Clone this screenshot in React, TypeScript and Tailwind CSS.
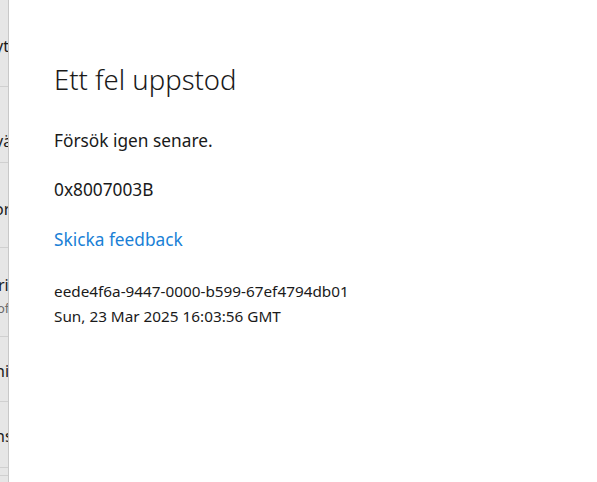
export default function App() {
  return (
    <div
      className="flex w-[597px] h-[482px] bg-white overflow-hidden"
      style={{ fontFamily: '"Noto Sans", "Open Sans", sans-serif' }}
    >
      <div className="w-[9px] shrink-0 bg-[#e6e6e6] border-r border-[#c8c8c8] flex flex-col overflow-hidden">
        <div className="h-[87px] border-b border-[#d0d0d0] flex items-center shrink-0">
          <span className="ml-[-5px] text-[16px] text-[#1a1a1a] whitespace-nowrap pt-[6px]">yt</span>
        </div>
        <div className="h-[76px] border-b border-[#d0d0d0] flex items-center shrink-0 pt-[32px]">
          <span className="ml-[-5px] text-[16px] text-[#1a1a1a] whitespace-nowrap">vä</span>
        </div>
        <div className="h-[85px] border-b border-[#d0d0d0] flex items-center shrink-0 pt-[8px]">
          <span className="ml-[-6px] text-[16px] text-[#1a1a1a] whitespace-nowrap">or</span>
        </div>
        <div className="h-[89px] border-b border-[#d0d0d0] flex flex-col justify-center shrink-0 pt-[8px]">
          <span className="ml-[-2px] text-[16px] leading-[22px] text-[#1a1a1a] whitespace-nowrap">ri</span>
          <span className="ml-[-3px] mt-[1px] text-[13px] leading-[22px] text-[#6b6b6b] whitespace-nowrap">of</span>
        </div>
        <div className="h-[65px] border-b border-[#d0d0d0] flex items-center shrink-0 pt-[4px]">
          <span className="ml-[-5px] text-[16px] text-[#1a1a1a] whitespace-nowrap">ni</span>
        </div>
        <div className="h-[66px] border-b border-[#d0d0d0] flex items-center shrink-0 pt-[2px]">
          <span className="ml-[-5px] text-[16px] text-[#1a1a1a] whitespace-nowrap">ns</span>
        </div>
        <div className="h-[8px] border-b border-[#d0d0d0] shrink-0" />
      </div>
      <div className="flex-1 pl-[45px] pt-[60px] text-[#1a1a1a]">
        <h1 className="text-[27.5px] font-light leading-[40px]">Ett fel uppstod</h1>
        <p className="mt-[30px] text-[17.3px] leading-[22px]">Försök igen senare.</p>
        <p className="mt-[27px] text-[17.3px] leading-[22px]">0x8007003B</p>
        <p className="mt-[28px] text-[17.3px] leading-[22px] text-[#1a7fd6]">Skicka feedback</p>
        <p className="mt-[28px] text-[15.3px] leading-[25px]">eede4f6a-9447-0000-b599-67ef4794db01</p>
        <p className="text-[15.3px] leading-[25px]">Sun, 23 Mar 2025 16:03:56 GMT</p>
      </div>
    </div>
  );
}
